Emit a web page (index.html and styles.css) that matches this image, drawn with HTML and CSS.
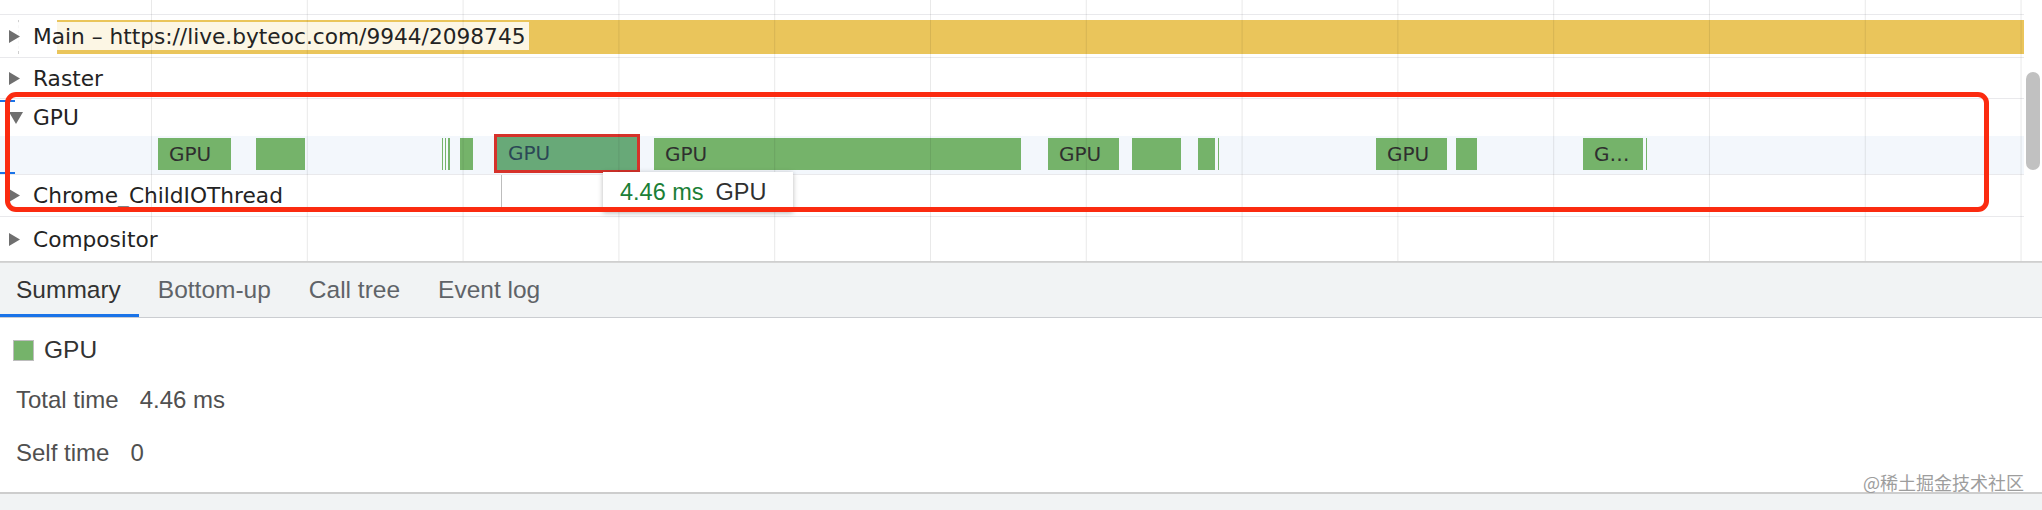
FILE: index.html
```html
<!DOCTYPE html>
<html>
<head>
<meta charset="utf-8">
<link rel="stylesheet" href="styles.css">
</head>
<body>
<div class="page">
  <div class="timeline">
    <div class="flame">
      <div class="ruler"></div>

      <div class="row row-main">
        <div class="dash-mark"></div>
        <div class="entry entry-yellow"></div>
        <div class="label label-over">
          <span class="twisty"><svg width="11" height="13" viewBox="0 0 11 13"><polygon points="0,0 11,6.5 0,13" fill="#6f6f6f"/></svg></span>
          <span class="label-text">Main – https://live.byteoc.com/9944/2098745</span>
        </div>
      </div>

      <div class="row row-raster">
        <div class="label">
          <span class="twisty"><svg width="11" height="13" viewBox="0 0 11 13"><polygon points="0,0 11,6.5 0,13" fill="#6f6f6f"/></svg></span>
          <span class="label-text">Raster</span>
        </div>
      </div>

      <div class="group">
        <div class="blue-mark blue-mark-top"></div>
        <div class="group-header">
          <div class="label">
            <span class="twisty"><svg width="14" height="12" viewBox="0 0 14 12"><polygon points="0,0 14,0 7,12" fill="#6f6f6f"/></svg></span>
            <span class="label-text">GPU</span>
          </div>
        </div>
        <div class="track">
          <div class="entry entry-green" style="left:158px;width:73px">GPU</div>
          <div class="entry entry-green" style="left:256px;width:49px"></div>
          <div class="entry entry-green thin" style="left:442px;width:1px"></div>
          <div class="entry entry-green thin" style="left:445px;width:1px"></div>
          <div class="entry entry-green thin" style="left:448px;width:2px"></div>
          <div class="entry entry-green" style="left:460px;width:13px"></div>
          <div class="entry entry-selected" style="left:494px;width:146px">GPU</div>
          <div class="entry entry-green" style="left:654px;width:367px">GPU</div>
          <div class="entry entry-green" style="left:1048px;width:71px">GPU</div>
          <div class="entry entry-green" style="left:1132px;width:49px"></div>
          <div class="entry entry-green" style="left:1198px;width:17px"></div>
          <div class="entry entry-green thin" style="left:1218px;width:1px"></div>
          <div class="entry entry-green" style="left:1376px;width:71px">GPU</div>
          <div class="entry entry-green" style="left:1456px;width:21px"></div>
          <div class="entry entry-green" style="left:1583px;width:60px">G…</div>
          <div class="entry entry-green thin" style="left:1646px;width:1px"></div>
          <div class="blue-mark blue-mark-bottom"></div>
        </div>
      </div>

      <div class="row row-chrome">
        <div class="flow-line"></div>
        <div class="label">
          <span class="twisty"><svg width="11" height="13" viewBox="0 0 11 13"><polygon points="0,0 11,6.5 0,13" fill="#6f6f6f"/></svg></span>
          <span class="label-text">Chrome_ChildIOThread</span>
        </div>
      </div>

      <div class="row row-compositor">
        <div class="label">
          <span class="twisty"><svg width="11" height="13" viewBox="0 0 11 13"><polygon points="0,0 11,6.5 0,13" fill="#6f6f6f"/></svg></span>
          <span class="label-text">Compositor</span>
        </div>
      </div>

      <div class="grid"></div>

      <div class="tooltip">
        <span class="tip-time">4.46 ms</span>
        <span class="tip-name">GPU</span>
      </div>

      <div class="annotation"></div>
    </div>
    <div class="vscroll">
      <div class="thumb"></div>
    </div>
  </div>

  <div class="tabs">
    <div class="tab tab-active">Summary</div>
    <div class="tab">Bottom-up</div>
    <div class="tab">Call tree</div>
    <div class="tab">Event log</div>
  </div>

  <div class="summary">
    <div class="summary-title">
      <span class="swatch"></span>
      <span class="summary-name">GPU</span>
    </div>
    <div class="srow"><span class="skey">Total time</span><span class="sval">4.46 ms</span></div>
    <div class="srow"><span class="skey">Self time</span><span class="sval">0</span></div>
  </div>

  <div class="footer"></div>

  <div class="watermark">@稀土掘金技术社区</div>
</div>
</body>
</html>
```

FILE: styles.css
```css
html, body {
  margin: 0;
  padding: 0;
  background: #ffffff;
}

.page {
  position: relative;
  width: 2042px;
  height: 510px;
  overflow: hidden;
  font-family: "DejaVu Sans", sans-serif;
}

/* ---------- timeline ---------- */
.timeline {
  display: flex;
  height: 262px;
  border-bottom: 1px solid #cfcfcf;
  box-sizing: border-box;
}

.flame {
  position: relative;
  flex: 1;
  min-width: 0;
}

.vscroll {
  width: 18px;
  flex: none;
  display: flex;
  justify-content: flex-start;
}

.thumb {
  margin-top: 72px;
  margin-left: 2px;
  width: 14px;
  height: 98px;
  border-radius: 7px;
  background: #c1c1c1;
}

.ruler {
  height: 14px;
  border-bottom: 1px solid #e9e9ec;
}

.row {
  position: relative;
  display: flex;
  align-items: center;
  border-bottom: 1px solid #e9e9ec;
}

.row-main { height: 42px; }
.row-raster { height: 40px; }
.row-chrome { height: 41px; }
.row-compositor { height: 44px; border-bottom: none; }

.label {
  position: relative;
  z-index: 2;
  display: flex;
  align-items: center;
  height: 28px;
  color: #232323;
  font-size: 21.7px;
  white-space: nowrap;
}

.label-over {
  background: rgba(255, 255, 255, 0.84);
  padding-right: 3px;
}

.twisty {
  width: 33px;
  height: 28px;
  box-sizing: border-box;
  padding-left: 9px;
  display: flex;
  align-items: center;
}

.dash-mark {
  position: absolute;
  left: 18px;
  top: 5px;
  height: 34px;
  border-left: 1px dashed #cfcfcf;
}

/* GPU group */
.group {
  position: relative;
  border-bottom: 1px solid #e9e9ec;
}

.group-header {
  height: 37px;
  display: flex;
  align-items: center;
}

.track {
  position: relative;
  height: 38px;
  background: #f3f7fc;
}

.entry {
  position: absolute;
  top: 2px;
  height: 32px;
  box-sizing: border-box;
  padding-left: 11px;
  font-size: 20px;
  line-height: 32px;
  color: #2f2f2f;
  white-space: nowrap;
  overflow: hidden;
}

.entry-green {
  background: #75b36a;
}

.entry.thin {
  padding: 0;
}

.entry-yellow {
  left: 57px;
  right: 0;
  top: 5px;
  height: 34px;
  background: #eac55b;
  padding: 0;
}

.entry-selected {
  top: -2px;
  height: 39px;
  border: 3px solid #d6322a;
  background: #68a978;
  color: #2b4856;
  padding-left: 11px;
  line-height: 33px;
}

.blue-mark {
  position: absolute;
  left: 0;
  width: 15px;
  height: 2px;
  background: #1a73e8;
  z-index: 3;
}

.blue-mark-top { top: 1px; }
.blue-mark-bottom { bottom: 0; }

.flow-line {
  position: absolute;
  left: 501px;
  top: 0;
  height: 33px;
  border-left: 1px solid #bdbdbd;
}

/* vertical gridlines overlay */
.grid {
  position: absolute;
  left: 0;
  top: 0;
  right: 0;
  bottom: 0;
  pointer-events: none;
  z-index: 4;
  background-image: linear-gradient(to right, rgba(0, 0, 0, 0.085) 1px, transparent 1px);
  background-size: 155.8px 100%;
  background-position: 151px 0;
}

.tooltip {
  position: absolute;
  left: 603px;
  top: 172px;
  height: 40px;
  box-sizing: border-box;
  padding: 0 26px 0 17px;
  display: flex;
  align-items: center;
  gap: 12px;
  background: #ffffff;
  box-shadow: 0 1px 5px rgba(0, 0, 0, 0.28);
  font-family: "Liberation Sans", Arial, sans-serif;
  font-size: 23.5px;
  z-index: 5;
  white-space: nowrap;
}

.tip-time { color: #1b7f37; }
.tip-name { color: #303030; }

.annotation {
  position: absolute;
  left: 5px;
  top: 92px;
  width: 1984px;
  height: 120px;
  box-sizing: border-box;
  border: 5px solid #fb2b10;
  border-radius: 11px;
  z-index: 6;
  pointer-events: none;
}

/* ---------- bottom panel ---------- */
.tabs {
  display: flex;
  height: 56px;
  box-sizing: border-box;
  background: #f1f3f4;
  border-top: 1px solid #d6d6d6;
  border-bottom: 1px solid #cbcdd1;
  font-family: "Liberation Sans", Arial, sans-serif;
  font-size: 24.5px;
}

.tab {
  display: flex;
  align-items: center;
  padding: 2px 19px 0 19px;
  color: #5f6368;
  border-bottom: 3px solid transparent;
}

.tab-active {
  padding-left: 16px;
  padding-right: 18px;
  color: #333333;
  border-bottom-color: #1a73e8;
}

.summary {
  height: 174px;
  box-sizing: border-box;
  padding: 21px 16px 0 13px;
  font-family: "Liberation Sans", Arial, sans-serif;
  color: #505050;
  font-size: 24px;
}

.summary-title {
  display: flex;
  align-items: center;
  height: 22px;
  color: #333333;
  font-size: 24.5px;
}

.swatch {
  width: 21px;
  height: 21px;
  box-sizing: border-box;
  border: 1px solid #bdbdbd;
  background: #75b36a;
  margin-right: 10px;
}

.srow {
  display: flex;
  align-items: center;
  height: 28px;
  margin-top: 25px;
  padding-left: 3px;
}

.skey {
  margin-right: 21px;
}

.footer {
  height: 16px;
  border-top: 2px solid #cdcdcd;
  background: #f1f3f4;
}

.watermark {
  position: absolute;
  right: 18px;
  top: 470px;
  font-family: "Noto Sans CJK SC", sans-serif;
  font-size: 18px;
  line-height: 24px;
  color: #9d9d9d;
}
```
